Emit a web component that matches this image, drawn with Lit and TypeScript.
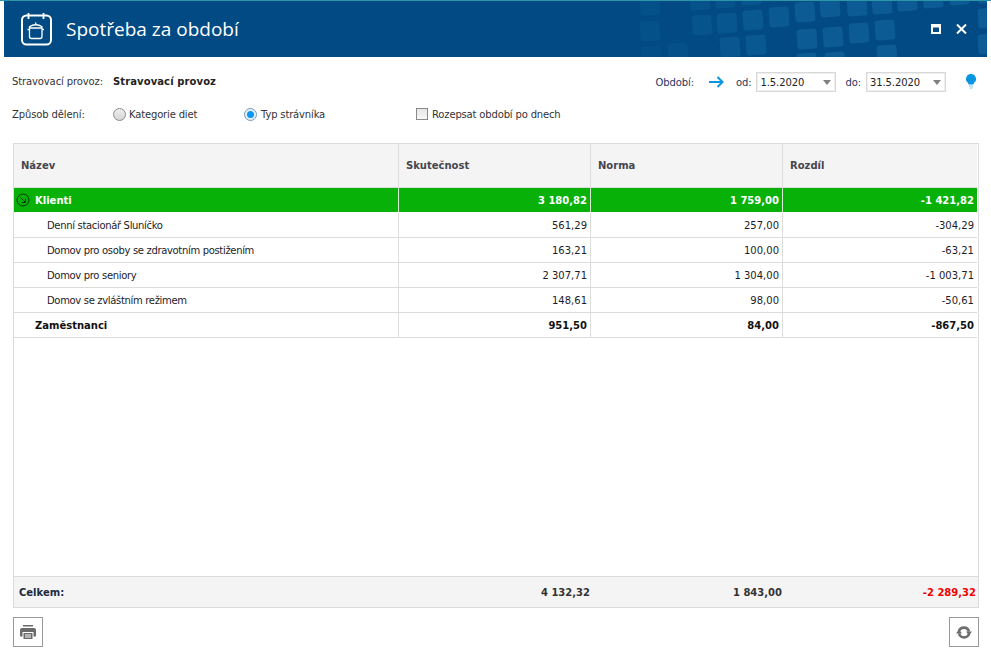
import { LitElement, html, css, svg } from "lit";
import { customElement } from "lit/decorators.js";

const TILES: [number, number, number, number, number][] = [
  [692,15,20,20,.55],[717,13,20,20,.7],[743,10,20,20,.8],[769,7,20,20,.9],[795,2,20,20,1],[820,-3,20,20,1],[847,-4,20,20,1],[872,-6,20,20,1],[897,-9,20,20,1],[923,-12,20,20,1],[949,-15,20,20,1],[977,-17,20,20,1],
  [640,21,20,20,.35],[668,43,20,20,.4],[641,46,20,20,.3],[720,37,20,20,.75],[746,35,20,20,.85],[797,29,20,20,1],[823,27,20,20,1],[849,23,20,20,1],[875,20,20,20,1],[877,45,20,20,1],[978,8,20,20,1],[978,34,20,20,1],[797,53,20,20,1],[825,52,20,20,1],
  [640,-5,20,20,.35],[690,-10,20,20,.5],[715,-12,20,20,.6],[741,-15,20,20,.7],
];

const ROWS = [
  ["Denní stacionář Sluníčko", "561,29", "257,00", "-304,29"],
  ["Domov pro osoby se zdravotním postižením", "163,21", "100,00", "-63,21"],
  ["Domov pro seniory", "2 307,71", "1 304,00", "-1 003,71"],
  ["Domov se zvláštním režimem", "148,61", "98,00", "-50,61"],
];

@customElement("app-root")
export class AppRoot extends LitElement {
  static styles = css`
    :host { display: block; width: 991px; height: 658px; background: #fff; font-family: "DejaVu Sans", Verdana, sans-serif; font-size: 10px; color: #1c1c28; overflow: hidden; }
    .accent { height: 1px; background: #2b96a8; }
    .head { height: 56px; margin: 0 4px; background: #014a83; position: relative; overflow: hidden; display: flex; align-items: center; padding-left: 17px; color: #fff; }
    .tiles { position: absolute; left: -4px; top: -1px; width: 991px; height: 57px; }
    .title { position: relative; font-family: "Open Sans", sans-serif; font-size: 19px; margin-left: 14px; }
    .logo { position: relative; width: 31px; height: 33px; }
    .winbtns { position: absolute; right: 20px; top: 23px; display: flex; gap: 15px; }
    .winbtns svg { display: block; }
    .page { padding: 0 12px 0 12px; }
    .bar1 { height: 16px; margin-top: 16px; display: flex; align-items: center; position: relative; }
    .lbl { width: 101px; color: #333; letter-spacing: -0.12px; }
    .strong { font-weight: bold; color: #222; letter-spacing: 0.1px; }
    .right { position: absolute; right: 3px; top: -1px; display: flex; align-items: center; color: #2a3560; letter-spacing: -0.1px; }
    .arrow { margin: 0 12px 0 15px; display: block; }
    .sel { box-sizing: border-box; width: 80px; height: 20px; border: 1px solid #d9d9d9; box-shadow: inset 0 0 0 1px #eee; margin: 0 9px 0 5px; display: flex; align-items: center; padding-left: 3px; color: #222; position: relative; }
    .sel::after { content: ""; position: absolute; right: 4px; top: 7px; border: 4px solid transparent; border-top: 5px solid #808080; border-bottom: 0; }
    .bulb { margin-left: 11px; display: block; }
    .bar2 { height: 16px; margin-top: 17px; display: flex; align-items: center; color: #333; }
    .radio { box-sizing: border-box; flex: none; width: 13px; height: 13px; border-radius: 50%; border: 1px solid #8a8a8a; background: linear-gradient(#eee, #d6d6d6); margin-right: 3px; position: relative; }
    .radio.on { border-color: #7a9ab5; background: #e4f1fb; margin-right: 4px; }
    .radio.on::after { content: ""; position: absolute; left: 2px; top: 2px; width: 7px; height: 7px; border-radius: 50%; background: #0b97f2; }
    .opt { display: flex; align-items: center; letter-spacing: -0.16px; }
    .o1 { width: 131px; } .o2 { width: 172px; }
    .chk { box-sizing: border-box; width: 12px; height: 12px; border: 1px solid #8a8a8a; background: linear-gradient(#e6e6e6, #f8f8f8); margin-right: 4px; }
    .table { box-sizing: border-box; width: 966px; height: 465px; margin: 21px 0 0 1px; border: 1px solid #dcdcdc; display: flex; flex-direction: column; }
    .grid { display: grid; grid-template-columns: 385px 192px 192px 1fr; }
    .grid > div { box-sizing: border-box; border-right: 1px solid #dcdcdc; display: flex; align-items: center; justify-content: flex-end; padding-right: 3px; height: 25px; border-bottom: 1px solid #dcdcdc; }
    .grid > div:nth-child(4n) { border-right: 0; margin-right: 1px; padding-right: 3px; }
    .grid > .name { justify-content: flex-start; padding-left: 33px; letter-spacing: -0.33px; }
    .grid.h > div { height: 44px; background: #f4f4f4; justify-content: flex-start; padding-left: 7px; font-weight: bold; color: #45454f; }
    .grid.g > div { background: #07b107; color: #fff; font-weight: bold; border-bottom: 1px solid #fff; border-right-color: #d5ecd5; }
    .grid.g > .name { padding-left: 2px; gap: 5px; letter-spacing: 0; }
    .grid.b > div { font-weight: bold; color: #111; }
    .grid.b > .name { padding-left: 21px; letter-spacing: 0; }
    .fill { flex: 1; }
    .grid.f { border-top: 1px solid #dcdcdc; background: #f4f4f4; grid-template-columns: 385px 192px 192px 1fr; }
    .grid.f > div { height: 30px; border: 0; font-weight: bold; color: #333; padding-right: 1px; }
    .grid.f > .name { padding-left: 5px; color: #1c2a40; letter-spacing: 0; }
    .grid.f > .red { color: #f00000; padding-right: 1px; }
    .foot { display: flex; justify-content: space-between; margin: 9px 0 0 1px; }
    .btn { box-sizing: border-box; width: 30px; height: 30px; border: 1px solid #999; display: flex; align-items: center; justify-content: center; background: #fff; }
  `;

  render() {
    return html`
      <div class="accent"></div>
      <div class="head">
        <svg class="tiles" viewBox="0 0 991 57">
          ${TILES.map(([x, y, w, h, o]) => svg`<rect x=${x} y=${y} width=${w} height=${h} rx="3" fill="#0c5b94" opacity=${o} transform="rotate(-4 ${x + 10} ${y + 10})"></rect>`)}
        </svg>
        <svg class="logo" viewBox="0 0 31 33" fill="none" stroke="#fff">
          <rect x="1" y="2.500" width="29" height="29" rx="4.500" stroke-width="2"></rect>
          <path d="M7.500 0v6M22.500 0v6" stroke-width="1.800"></path>
          <path d="M8.500 15h12.500v8.500q0 2-2 2h-8.500q-2 0-2-2zM6.500 16.500h2M21 16.500h2M8 14q6.700-4.500 13.500 0M14.700 11V9.500" stroke-width="1.300"></path>
        </svg>
        <span class="title">Spotřeba za období</span>
        <div class="winbtns">
          <svg width="10" height="10" viewBox="0 0 10 10"><path fill="#fff" fill-rule="evenodd" d="M0 0h10v10H0zM2 3.500V8h6V3.500z"></path></svg>
          <svg width="11" height="10" viewBox="0 0 11 10"><path stroke="#fff" stroke-width="2" d="M1 .5l9 9M10 .5l-9 9"></path></svg>
        </div>
      </div>
      <div class="page">
        <div class="bar1">
          <span class="lbl">Stravovací provoz:</span>
          <span class="strong">Stravovací provoz</span>
          <div class="right">
            <span>Období:</span>
            <svg class="arrow" width="15" height="12" viewBox="0 0 15 12" fill="none" stroke="#0a95e0" stroke-width="2"><path d="M0 6h13M8.500 1l5 5-5 5"></path></svg>
            <span>od:</span><div class="sel">1.5.2020</div>
            <span>do:</span><div class="sel">31.5.2020</div>
            <svg class="bulb" width="10" height="16" viewBox="0 0 10 16"><path fill="#0a95e0" d="M5 0a5 5 0 0 1 3 9l-.6 1.500H2.600L2 9a5 5 0 0 1 3-9z"></path><path stroke="#7cc4ee" d="M3 12h4M3.500 14h3"></path></svg>
          </div>
        </div>
        <div class="bar2">
          <span class="lbl">Způsob dělení:</span>
          <div class="opt o1"><span class="radio"></span>Kategorie diet</div>
          <div class="opt o2"><span class="radio on"></span>Typ strávníka</div>
          <div class="opt"><span class="chk"></span>Rozepsat období po dnech</div>
        </div>
        <div class="table">
          <div class="grid h"><div>Název</div><div>Skutečnost</div><div>Norma</div><div>Rozdíl</div></div>
          <div class="grid g">
            <div class="name">
              <svg width="14" height="14" viewBox="0 0 14 14" fill="none" stroke="#063a06"><circle cx="7" cy="7" r="6"></circle><path d="M4.500 4.500l4.500 4.500M9.500 5.500v4h-4"></path></svg>
              Klienti
            </div><div>3 180,82</div><div>1 759,00</div><div>-1 421,82</div>
          </div>
          ${ROWS.map((r) => html`<div class="grid"><div class="name">${r[0]}</div><div>${r[1]}</div><div>${r[2]}</div><div>${r[3]}</div></div>`)}
          <div class="grid b"><div class="name">Zaměstnanci</div><div>951,50</div><div>84,00</div><div>-867,50</div></div>
          <div class="fill"></div>
          <div class="grid f"><div class="name">Celkem:</div><div>4 132,32</div><div>1 843,00</div><div class="red">-2 289,32</div></div>
        </div>
        <div class="foot">
          <div class="btn"><svg width="16" height="14" viewBox="0 0 16 14"><path fill="#6a6a6a" fill-rule="evenodd" d="M3 0h10v1.500H3zM2 3h12a2 2 0 0 1 2 2v6.500h-2.500V7h-11v4.500H0V5a2 2 0 0 1 2-2zM3.500 8h9v6h-9zM5 9.500v1h6v-1zM5 11.500v1h6v-1z"></path></svg></div>
          <div class="btn"><svg width="16" height="15" viewBox="0 0 16 15" fill="none" stroke="#6e6e6e" stroke-width="2.600"><path d="M2.800 6.500A5.300 5.300 0 0 1 13 6.500M13.200 8.500A5.300 5.300 0 0 1 3 8.500"></path><path fill="#6e6e6e" stroke="none" d="M10 6.500h6L13 10.500zM0 8.500h6L3 4.500z"></path></svg></div>
        </div>
      </div>
    `;
  }
}
